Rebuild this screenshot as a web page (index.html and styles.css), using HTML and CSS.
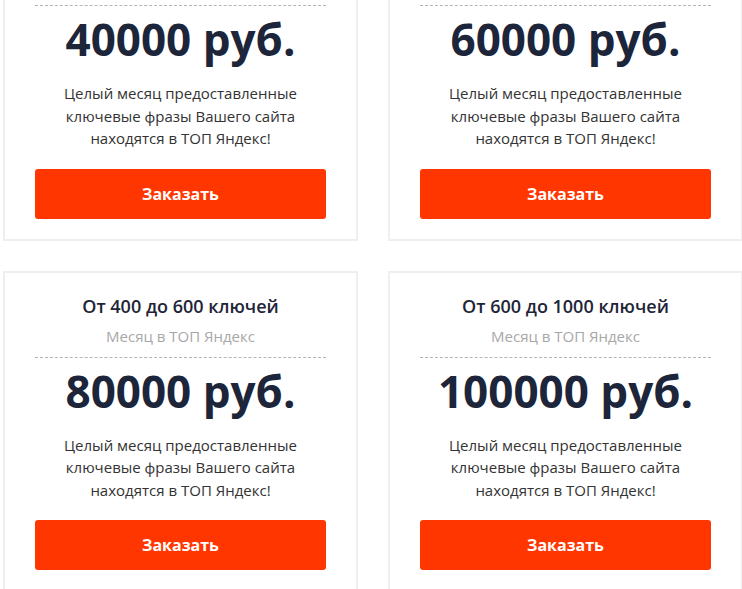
FILE: index.html
```html
<!DOCTYPE html>
<html lang="ru">
<head>
<meta charset="utf-8">
<title>Тарифы</title>
<link rel="stylesheet" href="styles.css">
</head>
<body>
<div class="plans">
  <div class="plan">
    <div class="plan-title">От 200 до 300 ключей</div>
    <div class="plan-sub">Месяц в ТОП Яндекс</div>
    <div class="plan-price">40000 руб.</div>
    <p class="plan-desc">Целый месяц предоставленные ключевые фразы Вашего сайта находятся в ТОП Яндекс!</p>
    <a class="plan-btn" href="#">Заказать</a>
  </div>
  <div class="plan">
    <div class="plan-title">От 300 до 400 ключей</div>
    <div class="plan-sub">Месяц в ТОП Яндекс</div>
    <div class="plan-price">60000 руб.</div>
    <p class="plan-desc">Целый месяц предоставленные ключевые фразы Вашего сайта находятся в ТОП Яндекс!</p>
    <a class="plan-btn" href="#">Заказать</a>
  </div>
  <div class="plan">
    <div class="plan-title">От 400 до 600 ключей</div>
    <div class="plan-sub">Месяц в ТОП Яндекс</div>
    <div class="plan-price">80000 руб.</div>
    <p class="plan-desc">Целый месяц предоставленные ключевые фразы Вашего сайта находятся в ТОП Яндекс!</p>
    <a class="plan-btn" href="#">Заказать</a>
  </div>
  <div class="plan">
    <div class="plan-title">От 600 до 1000 ключей</div>
    <div class="plan-sub">Месяц в ТОП Яндекс</div>
    <div class="plan-price">100000 руб.</div>
    <p class="plan-desc">Целый месяц предоставленные ключевые фразы Вашего сайта находятся в ТОП Яндекс!</p>
    <a class="plan-btn" href="#">Заказать</a>
  </div>
</div>
</body>
</html>
```

FILE: styles.css
```css
html, body {
  margin: 0;
  padding: 0;
  overflow: hidden;
  background: #fff;
}

body {
  font-family: "Open Sans", "Noto Sans", sans-serif;
  color: #333;
}

.plans {
  display: grid;
  grid-template-columns: 355px 355px;
  column-gap: 30px;
  row-gap: 30px;
  padding-left: 3px;
  margin-top: -81px;
}

.plan {
  border: 2px solid #efefef;
  padding: 21px 30px 20px;
  text-align: center;
  display: flex;
  flex-direction: column;
}

.plan-title {
  font-size: 18px;
  line-height: 24px;
  font-weight: 600;
  color: #1e2538;
}

.plan-sub {
  margin-top: 7px;
  font-size: 15px;
  line-height: 22px;
  color: #a8a8a8;
  padding-bottom: 10px;
  border-bottom: 1px dashed #b5b5b5;
}

.plan-price {
  margin-top: 4px;
  font-size: 44px;
  line-height: 58px;
  font-weight: 700;
  color: #1c2539;
}

.plan-desc {
  margin: 14px 0 0;
  font-size: 15px;
  line-height: 22.5px;
  color: #333;
}

.plan-btn {
  margin-top: 19px;
  height: 50px;
  display: flex;
  align-items: center;
  justify-content: center;
  background: #ff3600;
  border-radius: 3px;
  color: #fff;
  font-size: 16px;
  font-weight: 700;
  text-decoration: none;
}
```
